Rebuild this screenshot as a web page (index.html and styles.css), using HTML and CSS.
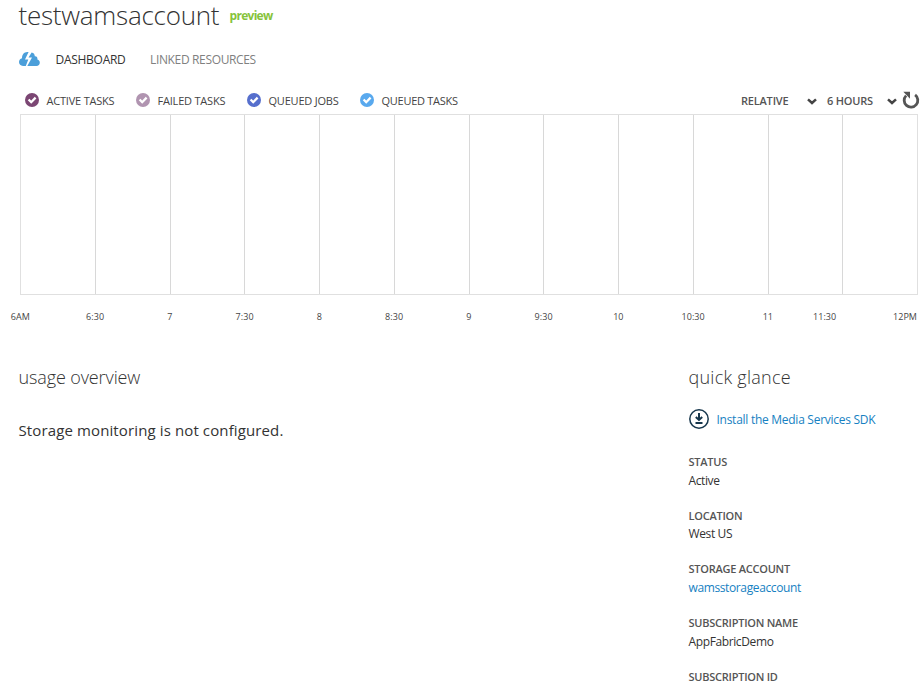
FILE: index.html
```html
<!DOCTYPE html>
<html lang="en">
<head>
<meta charset="utf-8">
<title>testwamsaccount</title>
<link rel="stylesheet" href="styles.css">
</head>
<body>
<svg class="defs" aria-hidden="true"><symbol id="check" viewBox="0 0 14 14"><circle cx="7" cy="7" r="7" fill="currentColor"/><path d="M3.6 6.5 6.2 9.2 10.6 4.6" fill="none" stroke="#fff" stroke-width="2.3"/></symbol><symbol id="chevron" viewBox="0 0 10 7"><path d="M1 1.3 5 5 9 1.3" fill="none" stroke="#444" stroke-width="2.5"/></symbol></svg>
<header class="heading"><h1>testwamsaccount</h1><span class="preview">preview</span></header>
<nav class="tabs">
<svg class="cloud" viewBox="0 0 21 14"><path d="M4 14C1.5 14 0 12.2 0 10.1 0 8 1.3 6.6 3 6.2 3 2.8 5 0 8.2 0H9.6L6 7.4H9.3L6.8 14ZM8.3 14 13 5.5H9.5L12.6.5C14.8 1 15.8 2.4 15.8 4.3 18 4.2 18.7 5.6 18.4 7.4 20 7.8 20.8 9 20.8 10.5 20.8 12.7 19.4 14 17.5 14Z" fill="#4b9fda"/></svg>
<a class="tab active">DASHBOARD</a><a class="tab">LINKED RESOURCES</a>
</nav>
<div class="toolbar">
<span class="series active-tasks"><svg><use href="#check"/></svg><span>ACTIVE TASKS</span></span>
<span class="series failed-tasks"><svg><use href="#check"/></svg><span>FAILED TASKS</span></span>
<span class="series queued-jobs"><svg><use href="#check"/></svg><span>QUEUED JOBS</span></span>
<span class="series queued-tasks"><svg><use href="#check"/></svg><span>QUEUED TASKS</span></span>
<div class="filters"><span class="select relative">RELATIVE<svg><use href="#chevron"/></svg></span><span class="select hours">6 HOURS<svg><use href="#chevron"/></svg></span>
<svg class="refresh" viewBox="0 0 18 18"><path d="M13.1 3.9A6.8 6.8 0 1 1 4.1 4.6" fill="none" stroke="#555" stroke-width="2.8"/><path d="M1.3 .8H8V7.8Z" fill="#555"/></svg></div>
</div>
<div class="chart"><i></i><i></i><i></i><i></i><i></i><i></i><i></i><i></i><i></i><i></i><i></i><i></i></div>
<div class="axis"><span>6AM</span><span>6:30</span><span>7</span><span>7:30</span><span>8</span><span>8:30</span><span>9</span><span>9:30</span><span>10</span><span>10:30</span><span>11</span><span>11:30</span><span class="last">12PM</span></div>
<main class="columns">
<section class="usage"><h2>usage overview</h2><p>Storage monitoring is not configured.</p></section>
<section class="glance"><h2>quick glance</h2>
<a class="install"><svg viewBox="0 0 20 20"><circle cx="10" cy="10" r="9.2" fill="none" stroke="#17374d" stroke-width="1.5"/><path d="M10 4V10.5M6.8 8 10 11 13.2 8M6.5 14H13.5" fill="none" stroke="#17374d" stroke-width="2"/></svg><span>Install the Media Services SDK</span></a>
<dl>
<dt>STATUS</dt><dd>Active</dd>
<dt>LOCATION</dt><dd>West US</dd>
<dt>STORAGE ACCOUNT</dt><dd><a class="storage">wamsstorageaccount</a></dd>
<dt>SUBSCRIPTION NAME</dt><dd>AppFabricDemo</dd>
<dt>SUBSCRIPTION ID</dt>
</dl></section>
</main>
</body>
</html>
```
FILE: styles.css
```css
* { box-sizing: border-box; }
body { margin: 0; width: 923px; height: 689px; overflow: hidden; background: #fff; color: #333; font-family: "Open Sans", "Noto Sans", sans-serif; font-size: 12px; white-space: nowrap; }
h1, h2, p, dl, dd { margin: 0; }
svg { display: block; flex: none; }
.defs { position: absolute; width: 0; height: 0; }
.heading { display: flex; height: 46px; padding-left: 18.5px; }
h1 { width: 211px; font-size: 26px; font-weight: 300; line-height: 31px; letter-spacing: -.25px; color: #333; }
.preview { color: #86c33b; font-weight: 700; line-height: 32px; letter-spacing: -.7px; }
.tabs { display: flex; height: 45px; padding-left: 19px; line-height: 28px; }
.cloud { width: 21px; height: 14px; margin: 6px 15.5px 0 0; }
.tab { width: 94.5px; color: #808080; letter-spacing: -.35px; }
.tab.active { color: #333; letter-spacing: -.28px; }
.toolbar { display: flex; height: 23px; padding-left: 25px; line-height: 20px; font-size: 11px; }
.series { display: flex; width: 111px; letter-spacing: -.2px; }
.series svg { width: 14px; height: 14px; margin: 2px 7.5px 0 0; }
.active-tasks { color: #7b4673; }
.failed-tasks { color: #b094b0; }
.queued-jobs { color: #566fcd; width: 113px; }
.queued-tasks { color: #59a9ee; letter-spacing: -.27px; }
.series span { color: #444; }
.filters { display: flex; margin-left: auto; padding-right: 3px; }
.select { display: flex; justify-content: space-between; font-weight: 600; color: #555; letter-spacing: -.2px; }
.select svg { width: 10px; height: 7px; margin-top: 7px; }
.relative { width: 76px; margin-right: 10px; }
.hours { width: 70px; margin-right: 5px; }
.refresh { width: 18px; height: 18px; }
.chart { display: grid; grid-template-columns: repeat(12, 74.75px); width: 898px; height: 181px; margin-left: 20px; border: 1px solid #e0e0e0; }
.chart i { border-right: 1px solid #d8d8d8; }
.chart i:last-child { border: 0; }
.axis { display: grid; grid-template-columns: repeat(12, 74.75px) 37px; height: 70px; margin-left: -17px; padding-top: 14px; font-size: 9px; line-height: 16px; letter-spacing: .05px; color: #444; text-align: center; }
.axis span:nth-child(12) { margin-left: -36px; }
.axis .last { text-align: right; }
.columns { display: grid; grid-template-columns: 670px 1fr; margin-left: 18.5px; }
h2 { font-size: 18px; line-height: 24px; font-weight: 300; color: #333; letter-spacing: -.12px; }
.glance h2 { letter-spacing: .25px; }
.usage p { margin-top: 30px; font-size: 15px; line-height: 22px; letter-spacing: .12px; }
.install { display: flex; margin-top: 20px; color: #1681c2; line-height: 21px; letter-spacing: -.27px; }
.install svg { width: 20px; height: 20px; margin-right: 8px; }
dl { margin-top: 23px; }
dt { height: 18.7px; line-height: 18px; font-size: 11px; font-weight: 600; color: #555; letter-spacing: -.24px; }
dd { height: 35px; line-height: 18px; letter-spacing: -.38px; }
.storage { color: #1681c2; }
```
